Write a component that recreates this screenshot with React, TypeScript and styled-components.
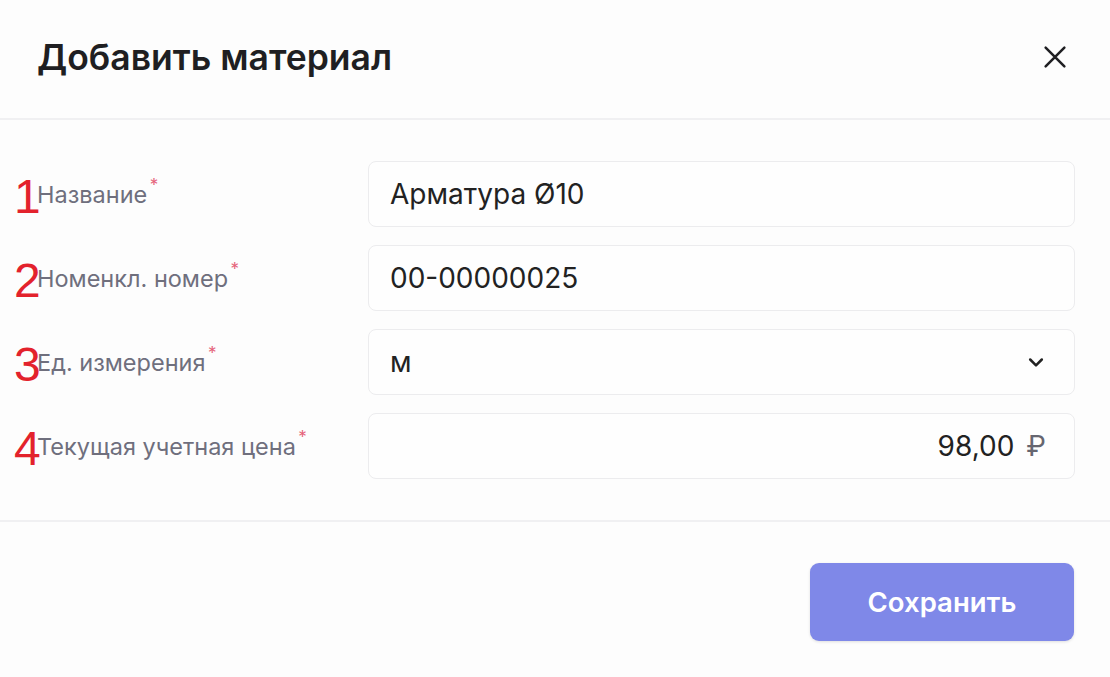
import styled, { createGlobalStyle } from "styled-components";

const GlobalStyle = createGlobalStyle`
  html, body {
    margin: 0;
    padding: 0;
    background: #fdfdfd;
  }
  * {
    box-sizing: border-box;
  }
`;

const Modal = styled.div`
  width: 1110px;
  height: 677px;
  background: #fdfdfd;
  display: flex;
  flex-direction: column;
  font-family: Inter, "Noto Sans", sans-serif;
  color: #222;
`;

const Header = styled.div`
  height: 120px;
  padding: 0 38px 4px 37px;
  display: flex;
  align-items: center;
  justify-content: space-between;
  border-bottom: 2px solid #f0f0f2;
`;

const Title = styled.h2`
  margin: 0;
  font-size: 35.5px;
  font-weight: 600;
  color: #1f1f22;
`;

const CloseButton = styled.button`
  width: 34px;
  height: 34px;
  padding: 0;
  border: none;
  background: transparent;
  display: flex;
  align-items: center;
  justify-content: center;
  color: #1f1f22;
  cursor: pointer;
`;

const Body = styled.div`
  padding: 41px 35px 41px 0;
  display: flex;
  flex-direction: column;
  gap: 18px;
  border-bottom: 2px solid #f0f0f2;
`;

const Row = styled.div`
  display: grid;
  grid-template-columns: 368px 1fr;
  align-items: center;
`;

const LabelWrap = styled.div`
  display: flex;
  align-items: center;
  padding-left: 14px;
`;

const Mark = styled.span`
  font-family: "Liberation Sans", Arial, sans-serif;
  font-size: 48px;
  line-height: 1;
  color: #e3222c;
  width: 23px;
  margin-top: 6px;
`;

const Label = styled.span`
  position: relative;
  font-size: 23.5px;
  color: #6f6f7d;
`;

const Required = styled.sup`
  position: absolute;
  top: -3px;
  right: -11px;
  font-size: 17px;
  line-height: 1;
  color: #e5637a;
`;

const Field = styled.div<{ $align?: "left" | "right" }>`
  height: 66px;
  border: 1.5px solid #ececee;
  border-radius: 8px;
  background: #fefefe;
  display: flex;
  align-items: center;
  justify-content: ${({ $align }) => ($align === "right" ? "flex-end" : "space-between")};
  padding: 0 28px 0 21px;
  font-size: 28px;
  color: #222;
`;

const Currency = styled.span`
  margin-left: 12px;
  color: #666670;
`;

const Footer = styled.div`
  flex: 1;
  display: flex;
  justify-content: flex-end;
  align-items: flex-start;
  padding: 41px 36px 0 0;
`;

const SaveButton = styled.button`
  width: 264px;
  height: 78px;
  border: none;
  border-radius: 9px;
  background: #7f88e8;
  color: #ffffff;
  font-family: Inter, "Noto Sans", sans-serif;
  font-size: 27.5px;
  font-weight: 600;
  box-shadow: 0 1px 3px rgba(0, 0, 0, 0.12);
  cursor: pointer;
`;

const fields = [
  { n: "1", label: "Название", value: "Арматура Ø10" },
  { n: "2", label: "Номенкл. номер", value: "00-00000025" },
  { n: "3", label: "Ед. измерения", value: "м", select: true },
  { n: "4", label: "Текущая учетная цена", value: "98,00", price: true },
];

const Chevron = () => (
  <svg width="20" height="20" viewBox="0 0 24 24" fill="none" stroke="currentColor" strokeWidth="3" strokeLinecap="round" strokeLinejoin="round">
    <path d="M5 9l7 7 7-7" />
  </svg>
);

const CloseIcon = () => (
  <svg width="30" height="30" viewBox="0 0 24 24" fill="none" stroke="currentColor" strokeWidth="2" strokeLinecap="round">
    <path d="M4.5 4.5l15 15M19.5 4.5l-15 15" />
  </svg>
);

export default function App() {
  return (
    <>
      <GlobalStyle />
      <Modal>
        <Header>
          <Title>Добавить материал</Title>
          <CloseButton aria-label="Закрыть">
            <CloseIcon />
          </CloseButton>
        </Header>
        <Body>
          {fields.map((f) => (
            <Row key={f.n}>
              <LabelWrap>
                <Mark>{f.n}</Mark>
                <Label>
                  {f.label}
                  <Required>*</Required>
                </Label>
              </LabelWrap>
              {f.price ? (
                <Field $align="right">
                  <span>{f.value}</span>
                  <Currency>₽</Currency>
                </Field>
              ) : (
                <Field>
                  <span>{f.value}</span>
                  {f.select && <Chevron />}
                </Field>
              )}
            </Row>
          ))}
        </Body>
        <Footer>
          <SaveButton>Сохранить</SaveButton>
        </Footer>
      </Modal>
    </>
  );
}
